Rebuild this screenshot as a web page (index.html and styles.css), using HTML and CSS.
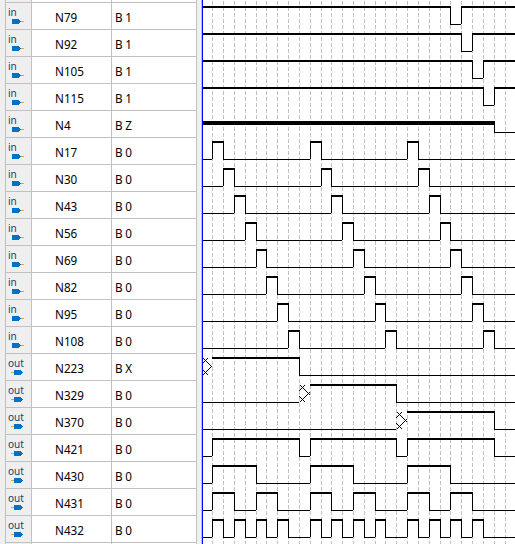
FILE: index.html
```html
<!DOCTYPE html>
<html lang="en">
<head>
<meta charset="utf-8">
<title>Waveform viewer</title>
<link rel="stylesheet" href="styles.css">
</head>
<body>
<main class="viewer">
  <section class="signals" id="signals">
    <div class="row row-partial"><div class="cell kind"></div><div class="cell name"></div><div class="cell value"></div></div>
  </section>
  <div class="splitter"></div>
  <svg class="waves" id="waves" width="313" height="544" viewBox="202 0 313 544" shape-rendering="crispEdges"></svg>
</main>
<script src="app.js"></script>
</body>
</html>
```
FILE: styles.css
```css
body {
  margin: 0;
  background: #fff;
  color: #000;
  font-family: "Noto Sans", "Open Sans", sans-serif;
  font-size: 11.7px;
}
.viewer {
  display: flex;
  width: 515px;
  height: 544px;
  overflow: hidden;
  background: #efefef;
}
.signals {
  width: 190px;
  margin-left: 5px;
  padding-bottom: 1px;
  border-left: 1px solid #c0c0c0;
  border-right: 1px solid #c0c0c0;
}
.row {
  display: grid;
  grid-template-columns: 26px 80px 84px;
  height: 27px;
}
.row-partial { height: 3px; }
.row-last { height: 1px; }
.cell {
  box-sizing: border-box;
  border-bottom: 1px solid #c0c0c0;
  border-right: 1px solid #c0c0c0;
  background: #fff;
  line-height: 16px;
  white-space: pre;
}
.row-last .cell { border-bottom: 0; }
.value { border-right: 0; padding: 6px 0 0 3px; word-spacing: -0.4px; }
.name { padding: 6px 0 0 23px; }
.kind {
  background: #efefef;
  padding: 2px 0 0 2px;
  color: #15436b;
  font-size: 10px;
  line-height: 14px;
}
.row-partial .cell, .row-last .cell { padding-top: 0; }
.pin { display: block; width: 16px; height: 5px; margin-left: 3px; shape-rendering: crispEdges; }
.pin-body { fill: #0072c6; }
.pin-lead { fill: #f9a11b; }
.splitter {
  box-sizing: border-box;
  width: 5px;
  border-right: 1px solid #c0c0c0;
  background: #efefef;
}
.waves { display: block; background: #fff; }
.cursor { fill: #0000ff; }
.grid-line { stroke: #c0c0c0; stroke-width: 1; stroke-dasharray: 4 2; }
.wave { fill: #000; }
```
FILE: app.js
```js
// Tick positions of the time grid.
const ticks = [212, 223, 234, 245, 256, 266, 277, 288, 299, 310, 321, 331, 342, 353,
  364, 375, 385, 396, 407, 418, 429, 440, 450, 461, 472, 483, 494, 505];
const START = 202, END = 515, ROW = 27, TOP = 3;

// Each wave is a list of [level, first tick]; tick -1 is the left edge.
const pulses = (...list) => {
  const wave = [[0, -1]];
  list.forEach(([from, to]) => wave.push([1, from], [0, to]));
  return wave;
};
const dip = t => [[1, -1], [0, t], [1, t + 1]];
const walk = t => pulses([t, t + 1], [t + 9, t + 10], [t + 18, t + 19]);

const signals = [
  ["in", "N79", "1", dip(22)],
  ["in", "N92", "1", dip(23)],
  ["in", "N105", "1", dip(24)],
  ["in", "N115", "1", dip(25)],
  ["in", "N4", "Z", [["Z", -1], [0, 26]]],
  ...["N17", "N30", "N43", "N56", "N69", "N82", "N95", "N108"].map((n, i) => ["in", n, "0", walk(i)]),
  ["out", "N223", "X", [["X", -1], [1, 0], [0, 8]]],
  ["out", "N329", "0", [[0, -1], ["X", 8], [1, 9], [0, 17]]],
  ["out", "N370", "0", [[0, -1], ["X", 17], [1, 18], [0, 26]]],
  ["out", "N421", "0", pulses([0, 8], [9, 17], [18, 26])],
  ["out", "N430", "0", pulses([0, 4], [9, 13], [18, 22])],
  ["out", "N431", "0", pulses([0, 2], [4, 6], [9, 11], [13, 15], [18, 20], [22, 24])],
  ["out", "N432", "0", pulses([0, 1], [2, 3], [4, 5], [6, 7], [9, 10], [11, 12], [13, 14], [15, 16],
    [18, 19], [20, 21], [22, 23], [24, 25])]
];

const rect = (x, y, w, h, cls = "wave") =>
  `<rect class="${cls}" x="${x}" y="${y}" width="${w}" height="${h}"/>`;

// Unknown level: two crossed strokes that meet in an arrow point.
function unknown(x, y, end) {
  const mid = y + 12;
  const dots = [];
  for (let i = 1; i <= 10; i++) {
    dots.push([x + i, mid - 9 + i], [x + i, mid + 9 - i]);
  }
  for (let i = 0; i <= 5; i++) {
    dots.push([x + i, mid - 3 - i], [x + i, mid + 3 + i]);
  }
  return dots.filter(([px]) => px < end).map(([px, py]) => rect(px, py, 1, 1)).join("");
}

function drawWave(wave, y) {
  let out = "";
  wave.forEach(([level, tick], i) => {
    const x = tick < 0 ? START : ticks[tick];
    const next = wave[i + 1];
    const end = next ? ticks[next[1]] : END;
    if (level === 1) out += rect(x, y + 3, end - x + (next ? 1 : 0), 2);
    if (level === 0) out += rect(x, y + 21, end - x, 1);
    if (level === "Z") out += rect(x, y + 10, end - x + 1, 4);
    if (level === "X") out += unknown(x, y, end);
    const before = i ? wave[i - 1][0] : null;
    if (before === 0 && level === 1) out += rect(x, y + 3, 1, 18);
    if (before === 1 && level === 0) out += rect(x, y + 3, 1, 19);
    if (before === "Z") out += rect(x, y + 10, 1, 12);
  });
  return out;
}

const pins = {
  in: '<path class="pin-body" d="M1 0h7v1h1v1h1v1h-1v1h-1v1h-7z"/><path class="pin-lead" d="M10 2h3v1h-3z"/>',
  out: '<path class="pin-lead" d="M0 2h3v1h-3z"/><path class="pin-body" d="M3 0h7v1h1v1h1v1h-1v1h-1v1h-7z"/>'
};

document.getElementById("signals").insertAdjacentHTML("beforeend",
  signals.map(([kind, name, value]) => `<div class="row"><div class="cell kind">${kind}` +
    `<svg class="pin" viewBox="0 0 16 5">${pins[kind]}</svg></div>` +
    `<div class="cell name">${name}</div><div class="cell value">B ${value}</div></div>`).join("") +
  '<div class="row row-last"><div class="cell kind"></div><div class="cell name"></div><div class="cell value"></div></div>');

document.getElementById("waves").innerHTML =
  ticks.map(x => `<line class="grid-line" x1="${x + 0.5}" x2="${x + 0.5}" y1="1" y2="544"/>`).join("") +
  signals.map((s, i) => drawWave(s[3], TOP + i * ROW)).join("") +
  rect(202, 0, 1, 544, "cursor");
```
